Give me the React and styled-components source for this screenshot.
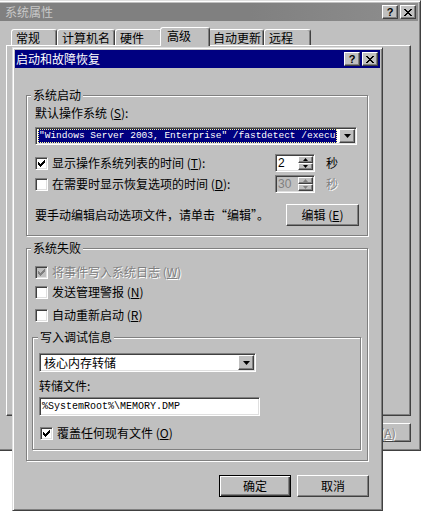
import React from 'react';
import styled, { createGlobalStyle, css } from 'styled-components';

const GlobalStyle = createGlobalStyle`
  html, body {
    margin: 0;
    padding: 0;
    background: #fff;
  }
  body {
    font-family: "Noto Sans CJK SC", "Noto Sans", sans-serif;
    font-size: 12px;
    color: #000;
  }
  * {
    box-sizing: border-box;
  }
  u {
    text-decoration: underline;
    text-underline-offset: 1px;
  }
`;

const raised = css`
  border: 1px solid;
  border-color: #fff #404040 #404040 #fff;
  box-shadow: inset -1px -1px #808080;
`;

const sunken = css`
  border: 1px solid;
  border-color: #808080 #fff #fff #808080;
  box-shadow: inset 1px 1px #404040, inset -1px -1px #dfdfdf;
`;

const Desktop = styled.div`
  position: relative;
  width: 426px;
  height: 521px;
  overflow: hidden;
  background: #fff;
`;

const Frame = styled.div`
  position: absolute;
  display: flex;
  flex-direction: column;
  background: #c0c0c0;
  border: 1px solid;
  border-color: #dfdfdf #404040 #404040 #dfdfdf;
  box-shadow: inset 1px 1px #fff, inset -1px -1px #808080;
  padding: 2px;
`;

const OuterWindow = styled(Frame)`
  left: -4px;
  top: 0;
  width: 425px;
  height: 451px;
`;

const Dialog = styled(Frame)`
  left: 12px;
  top: 47px;
  width: 371px;
  height: 464px;
`;

const TitleBar = styled.div`
  display: flex;
  align-items: center;
  flex-shrink: 0;
  height: 18px;
  padding: 0 2px 0 ${p => p.$indent}px;
  background: ${p => (p.$active ? '#000080' : 'linear-gradient(90deg, #808080 60%, #8e8e8e)')};
  color: ${p => (p.$active ? '#fff' : '#c8c8c8')};
`;

const TitleText = styled.span`
  flex: 1;
  font-size: 12px;
  line-height: 18px;
  white-space: nowrap;
`;

const CaptionButtons = styled.div`
  display: flex;
  gap: 2px;
`;

const CaptionButton = styled.div`
  ${raised};
  width: 16px;
  height: 14px;
  display: flex;
  align-items: center;
  justify-content: center;
  background: #c0c0c0;
  color: #000;
  font: bold 11px/1 "Liberation Sans", sans-serif;
`;

const OuterBody = styled.div`
  display: flex;
  flex-direction: column;
  flex: 1;
  padding: 6px 7px 0 7px;
`;

const TabStrip = styled.div`
  display: flex;
  align-items: flex-end;
  height: 18px;
  padding-left: 5px;
`;

const Tab = styled.div`
  position: relative;
  z-index: ${p => (p.$selected ? 1 : 0)};
  width: ${p => p.$w + (p.$selected ? 4 : 0)}px;
  height: ${p => (p.$selected ? 19 : 16)}px;
  margin: 0 ${p => (p.$selected ? -2 : 0)}px ${p => (p.$selected ? -1 : 0)}px;
  padding-left: ${p => (p.$selected ? 6 : 4)}px;
  background: #c0c0c0;
  border: 1px solid;
  border-bottom: none;
  border-color: #fff #404040 transparent #fff;
  border-radius: 3px 3px 0 0;
  box-shadow: inset -1px 0 #808080;
  font-size: 12px;
  line-height: ${p => (p.$selected ? 16 : 15)}px;
  white-space: nowrap;
`;

const TabPage = styled.div`
  ${raised};
  height: 371px;
  background: #c0c0c0;
`;

const OuterButtons = styled.div`
  display: flex;
  justify-content: flex-end;
  gap: 6px;
  margin-top: 7px;
`;

const PushButton = styled.div`
  ${raised};
  width: ${p => p.$w}px;
  height: ${p => p.$h}px;
  display: flex;
  align-items: center;
  justify-content: center;
  background: #c0c0c0;
  font-size: 12px;
  line-height: 14px;
  white-space: nowrap;
  color: ${p => (p.$disabled ? '#808080' : '#000')};
  text-shadow: ${p => (p.$disabled ? '1px 1px 0 #fff' : 'none')};
  ${p =>
    p.$default &&
    css`
      border: 1px solid #000;
      box-shadow: inset 1px 1px #fff, inset -1px -1px #404040, inset -2px -2px #808080;
    `}
`;

const DialogBody = styled.div`
  display: flex;
  flex-direction: column;
  padding: 0 11px;
`;

const Group = styled.div`
  position: relative;
  display: flex;
  flex-direction: column;
  border: 1px solid #808080;
  box-shadow: inset 1px 1px #fff, 1px 1px #fff;
`;

const StartupGroup = styled(Group)`
  margin: 27px 1px 0 0;
  padding: 10px 8px 9px 8px;
`;

const FailureGroup = styled(Group)`
  margin: 12px 1px 0 0;
  padding: 16px 6px 10px 5px;
`;

const DebugGroup = styled(Group)`
  margin-top: 15px;
  padding: 15px 6px 9px 6px;
`;

const Legend = styled.span`
  position: absolute;
  top: -8px;
  left: ${p => p.$left}px;
  padding: 0 2px;
  background: #c0c0c0;
  line-height: 14px;
  white-space: nowrap;
`;

const Label = styled.div`
  line-height: 14px;
  margin-top: ${p => p.$mt || 0}px;
  white-space: nowrap;
`;

const Combo = styled.div`
  ${sunken};
  display: flex;
  width: ${p => p.$w}px;
  height: ${p => p.$h}px;
  margin-top: ${p => p.$mt}px;
  padding: 1px;
  background: #fff;
`;

const ComboValue = styled.div`
  flex: 1;
  overflow: hidden;
  white-space: nowrap;
  margin: 0 2px 0 1px;
  padding-left: ${p => (p.$selected ? 1 : 2)}px;
  background: ${p => (p.$selected ? '#000080' : 'transparent')};
  color: ${p => (p.$selected ? '#fff' : '#000')};
  outline: ${p => (p.$selected ? '1px dotted #ffff90' : 'none')};
  outline-offset: -1px;
  font-family: ${p => (p.$mono ? '"Liberation Mono", monospace' : 'inherit')};
  font-size: ${p => (p.$mono ? 9.5 : 12)}px;
  line-height: ${p => (p.$mono ? 14 : 15)}px;
`;

const DropButton = styled.div`
  ${raised};
  width: 16px;
  display: flex;
  align-items: center;
  justify-content: center;
  background: #c0c0c0;
`;

const TextField = styled.div`
  ${sunken};
  width: ${p => p.$w}px;
  height: 19px;
  margin-top: 4px;
  padding: 2px 2px 0 2px;
  background: #fff;
  font: 10px/14px "Liberation Mono", monospace;
  white-space: nowrap;
  overflow: hidden;
`;

const OptionRow = styled.div`
  display: flex;
  align-items: center;
  height: 18px;
  margin-top: ${p => p.$mt}px;
`;

const CheckLine = styled.div`
  display: flex;
  align-items: center;
  height: 14px;
  margin-top: ${p => p.$mt || 0}px;
  margin-left: ${p => p.$ml}px;
  white-space: nowrap;
`;

const CheckBox = styled.span`
  ${sunken};
  width: 13px;
  height: 13px;
  flex-shrink: 0;
  display: inline-flex;
  align-items: center;
  justify-content: center;
  margin-right: 4px;
  background: ${p => (p.$disabled ? '#c0c0c0' : '#fff')};
`;

const OptionText = styled.span`
  flex: 1;
  line-height: 14px;
  white-space: nowrap;
  color: ${p => (p.$disabled ? '#808080' : '#000')};
  text-shadow: ${p => (p.$disabled ? '1px 1px 0 #fff' : 'none')};
`;

const Spin = styled.div`
  ${sunken};
  display: flex;
  width: 40px;
  height: 18px;
  padding: 1px;
  background: ${p => (p.$disabled ? '#c0c0c0' : '#fff')};
`;

const SpinValue = styled.span`
  flex: 1;
  padding-left: 1px;
  font: 12px/14px "Liberation Sans", sans-serif;
  color: ${p => (p.$disabled ? '#808080' : '#000')};
`;

const SpinArrows = styled.div`
  display: flex;
  flex-direction: column;
  width: 15px;
`;

const SpinArrow = styled.div`
  ${raised};
  flex: 1;
  display: flex;
  align-items: center;
  justify-content: center;
  background: #c0c0c0;
`;

const Unit = styled.span`
  width: 33px;
  margin-left: 11px;
  line-height: 14px;
  color: ${p => (p.$disabled ? '#808080' : '#000')};
  text-shadow: ${p => (p.$disabled ? '1px 1px 0 #fff' : 'none')};
`;

const EditRow = styled.div`
  display: flex;
  align-items: center;
  justify-content: space-between;
  margin-top: 11px;
`;

const DialogButtons = styled.div`
  display: flex;
  justify-content: flex-end;
  gap: 6px;
  margin-top: 14px;
`;

const tabs = [
  { label: '常规', w: 46 },
  { label: '计算机名', w: 58 },
  { label: '硬件', w: 47 },
  { label: '高级', w: 46, selected: true },
  { label: '自动更新', w: 56 },
  { label: '远程', w: 47 },
];

function CloseGlyph() {
  return (
    <svg width="8" height="7" viewBox="0 0 8 7" shapeRendering="crispEdges">
      <path d="M0 0h2l2 2.5L6 0h2L5 3.5 8 7H6L4 4.5 2 7H0l3-3.5z" fill="#000" />
    </svg>
  );
}

function Captions() {
  return (
    <CaptionButtons>
      <CaptionButton>?</CaptionButton>
      <CaptionButton>
        <CloseGlyph />
      </CaptionButton>
    </CaptionButtons>
  );
}

function DownArrow({ w = 7, h = 4, color = '#000' }) {
  return (
    <svg width={w} height={h} viewBox={`0 0 ${w} ${h}`}>
      <path d={`M0 0h${w}L${w / 2} ${h}z`} fill={color} />
    </svg>
  );
}

function UpArrow({ w = 5, h = 3, color = '#000' }) {
  return (
    <svg width={w} height={h} viewBox={`0 0 ${w} ${h}`}>
      <path d={`M0 ${h}h${w}L${w / 2} 0z`} fill={color} />
    </svg>
  );
}

function Check({ checked, disabled }) {
  return (
    <CheckBox $disabled={disabled}>
      {checked && (
        <svg width="7" height="7" viewBox="0 0 7 7" shapeRendering="crispEdges">
          <path
            d="M0 2h1v3H0zM1 3h1v3H1zM2 4h1v3H2zM3 3h1v3H3zM4 2h1v3H4zM5 1h1v3H5zM6 0h1v3H6z"
            fill={disabled ? '#808080' : '#000'}
          />
        </svg>
      )}
    </CheckBox>
  );
}

function SpinBox({ value, disabled }) {
  const c = disabled ? '#808080' : '#000';
  return (
    <Spin $disabled={disabled}>
      <SpinValue $disabled={disabled}>{value}</SpinValue>
      <SpinArrows>
        <SpinArrow>
          <UpArrow color={c} />
        </SpinArrow>
        <SpinArrow>
          <DownArrow w={5} h={3} color={c} />
        </SpinArrow>
      </SpinArrows>
    </Spin>
  );
}

export default function App() {
  return (
    <>
      <GlobalStyle />
      <Desktop>
        <OuterWindow>
          <TitleBar $indent={6}>
            <TitleText>系统属性</TitleText>
            <Captions />
          </TitleBar>
          <OuterBody>
            <TabStrip>
              {tabs.map(t => (
                <Tab key={t.label} $w={t.w} $selected={t.selected}>
                  {t.label}
                </Tab>
              ))}
            </TabStrip>
            <TabPage />
            <OuterButtons>
              <PushButton $w={70} $h={19}>确定</PushButton>
              <PushButton $w={70} $h={19}>取消</PushButton>
              <PushButton $w={70} $h={19} $disabled>
                应用(<u>A</u>)
              </PushButton>
            </OuterButtons>
          </OuterBody>
        </OuterWindow>

        <Dialog>
          <TitleBar $active $indent={1}>
            <TitleText>启动和故障恢复</TitleText>
            <Captions />
          </TitleBar>
          <DialogBody>
            <StartupGroup>
              <Legend $left={4}>系统启动</Legend>
              <Label>
                默认操作系统 (<u>S</u>):
              </Label>
              <Combo $w={322} $h={18} $mt={7}>
                <ComboValue $selected $mono>
                  "Windows Server 2003, Enterprise" /fastdetect /execu
                </ComboValue>
                <DropButton>
                  <DownArrow />
                </DropButton>
              </Combo>
              <OptionRow $mt={9}>
                <Check checked />
                <OptionText>
                  显示操作系统列表的时间 (<u>T</u>):
                </OptionText>
                <SpinBox value="2" />
                <Unit>秒</Unit>
              </OptionRow>
              <OptionRow $mt={3}>
                <Check />
                <OptionText>
                  在需要时显示恢复选项的时间 (<u>D</u>):
                </OptionText>
                <SpinBox value="30" disabled />
                <Unit $disabled>秒</Unit>
              </OptionRow>
              <EditRow>
                <Label>要手动编辑启动选项文件，请单击“编辑”。</Label>
                <PushButton $w={73} $h={22}>
                  编辑 (<u>E</u>)
                </PushButton>
              </EditRow>
            </StartupGroup>

            <FailureGroup>
              <Legend $left={4}>系统失败</Legend>
              <CheckLine $ml={3}>
                <Check checked disabled />
                <OptionText $disabled>
                  将事件写入系统日志 (<u>W</u>)
                </OptionText>
              </CheckLine>
              <CheckLine $ml={3} $mt={6}>
                <Check />
                <OptionText>
                  发送管理警报 (<u>N</u>)
                </OptionText>
              </CheckLine>
              <CheckLine $ml={3} $mt={9}>
                <Check />
                <OptionText>
                  自动重新启动 (<u>R</u>)
                </OptionText>
              </CheckLine>

              <DebugGroup>
                <Legend $left={5}>写入调试信息</Legend>
                <Combo $w={217} $h={19} $mt={0}>
                  <ComboValue>核心内存转储</ComboValue>
                  <DropButton>
                    <DownArrow />
                  </DropButton>
                </Combo>
                <Label $mt={7}>转储文件:</Label>
                <TextField $w={221}>%SystemRoot%\MEMORY.DMP</TextField>
                <CheckLine $ml={1} $mt={10}>
                  <Check checked />
                  <OptionText>
                    覆盖任何现有文件 (<u>O</u>)
                  </OptionText>
                </CheckLine>
              </DebugGroup>
            </FailureGroup>

            <DialogButtons>
              <PushButton $w={72} $h={22} $default>确定</PushButton>
              <PushButton $w={72} $h={22}>取消</PushButton>
            </DialogButtons>
          </DialogBody>
        </Dialog>
      </Desktop>
    </>
  );
}
